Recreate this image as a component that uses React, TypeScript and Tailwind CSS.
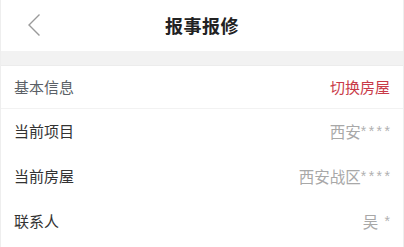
import React from "react";

const rows = [
  { label: "当前项目", value: "西安", mask: "****" },
  { label: "当前房屋", value: "西安战区", mask: "****" },
  { label: "联系人", value: "吴", mask: " *" },
];

export default function App() {
  return (
    <div
      className="w-[404px] h-[247px] overflow-hidden bg-white border-x border-[#eeeeee]"
      style={{ fontFamily: '"Noto Sans CJK SC", "Noto Sans", sans-serif' }}
    >
      <div className="relative h-[51px] flex items-center justify-center">
        <svg className="absolute left-[26px] top-[13px]" width="14" height="24" viewBox="0 0 14 24" fill="none">
          <path d="M12.5 1.5 L2 12 L12.5 22.5" stroke="#9a9a9a" strokeWidth="1.4" />
        </svg>
        <span className="text-[18px] font-bold text-[#222] tracking-[0.5px]">报事报修</span>
      </div>
      <div className="h-[15px] bg-[#f2f2f2] border-b border-[#ececec]" />
      <div className="flex items-center justify-between h-[43px] px-[13px] border-b border-[#f2f2f2]">
        <span className="text-[15px] text-[#5a5f66]">基本信息</span>
        <span className="text-[15px] text-[#c93a48]">切换房屋</span>
      </div>
      {rows.map((r) => (
        <div key={r.label} className="flex items-center justify-between h-[45px] px-[13px]">
          <span className="text-[15px] text-[#333]">{r.label}</span>
          <span className="text-[15.5px] text-[#a8a8a8] whitespace-pre">
            {r.value}
            <span
              className="text-[14px] tracking-[2.5px] mr-[-2.5px] align-[2px] text-[#b0b0b0]"
              style={{ fontFamily: '"Liberation Sans", sans-serif' }}
            >
              {r.mask}
            </span>
          </span>
        </div>
      ))}
    </div>
  );
}
